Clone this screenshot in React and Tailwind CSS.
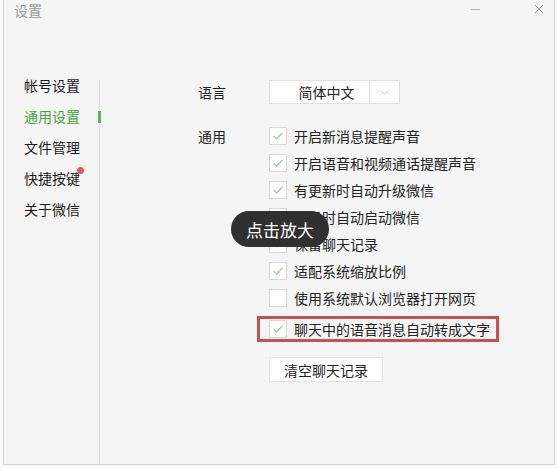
const font = { fontFamily: '"Noto Sans CJK SC", "Noto Sans", sans-serif' }

const menu = ['帐号设置', '通用设置', '文件管理', '快捷按键', '关于微信']

const options = [
  { label: '开启新消息提醒声音', on: true },
  { label: '开启语音和视频通话提醒声音', on: true },
  { label: '有更新时自动升级微信', on: true },
  { label: '开机时自动启动微信', on: true },
  { label: '保留聊天记录', on: true },
  { label: '适配系统缩放比例', on: true },
  { label: '使用系统默认浏览器打开网页', on: false },
]

function Check({ on }) {
  return (
    <span className="flex h-[18px] w-[18px] shrink-0 items-center justify-center border border-[#d9d9d9] bg-white">
      {on && (
        <svg width="12" height="10" viewBox="0 0 12 10" fill="none">
          <path d="M1.5 5.2 L4.6 8 L10.5 1.8" stroke="#8cc996" strokeWidth="1.1" />
        </svg>
      )}
    </span>
  )
}

function OptionRow({ label, on }) {
  return (
    <div className="flex h-[27px] items-center gap-[7px]">
      <Check on={on} />
      <span className="text-[14px] leading-none text-[#222]">{label}</span>
    </div>
  )
}

export default function App() {
  return (
    <div className="h-[468px] w-[557px] overflow-hidden bg-[#fbfbfb] pb-[3px] pl-[3px] pr-[2px]" style={font}>
      <div className="relative flex h-full flex-col border-b border-l border-r border-[#d4d4d4] bg-[#f5f5f5]">
        {/* title bar */}
        <div className="flex h-[22px] items-start justify-between pl-[10px] pr-[10px] pt-[3px]">
          <span className="text-[14px] leading-none text-[#9a9a9a]">设置</span>
          <div className="flex items-start gap-[54px] text-[#a8a8a8]">
            <span className="mt-[6px] block h-px w-[9px] bg-[#b5b5b5]" />
            <svg width="10" height="10" viewBox="0 0 10 10" className="mt-[1px]">
              <path d="M1 1 L9 9 M9 1 L1 9" stroke="#a5a5a5" strokeWidth="1" />
            </svg>
          </div>
        </div>

        <div className="flex flex-1 pt-[58px]">
          {/* sidebar */}
          <div className="relative w-[96px] border-r border-[#dedede] pl-[20px]">
            <div className="-mt-[11px] flex flex-col">
              {menu.map((m, i) => (
                <div
                  key={m}
                  className={`relative flex h-[31px] items-center text-[14px] leading-none ${
                    i === 1 ? 'text-[#3fa83f]' : 'text-[#1c1c1c]'
                  }`}
                >
                  {m}
                  {i === 3 && (
                    <span className="absolute left-[53px] top-[5px] h-[7px] w-[7px] rounded-full bg-[#dd5b5b]" />
                  )}
                </div>
              ))}
            </div>
            <span className="absolute -right-[2px] top-[31px] h-[12px] w-[3px] bg-[#5cb85c]" />
          </div>

          {/* content */}
          <div className="flex-1 pl-[98px]">
            <div className="flex items-center">
              <span className="w-[71px] text-[14px] leading-none text-[#222]">语言</span>
              <div className="flex h-[24px] w-[131px] items-center border border-[#e2e2e2] bg-white">
                <span className="flex-1 pl-[14px] text-center text-[14px] leading-none text-[#222]">简体中文</span>
                <span className="flex h-full w-[30px] items-center justify-center border-l border-[#e2e2e2]">
                  <svg width="9" height="5" viewBox="0 0 9 5">
                    <path d="M0.5 0.5 L4.5 4.2 L8.5 0.5" stroke="#c8c8c8" fill="none" />
                  </svg>
                </span>
              </div>
            </div>

            <div className="mt-[18px] flex">
              <span className="flex h-[27px] w-[71px] items-center text-[14px] leading-none text-[#222]">通用</span>
              <div className="flex flex-col">
                {options.map((o) => (
                  <OptionRow key={o.label} {...o} />
                ))}
                <div className="-ml-[12px] mt-[5px] flex h-[26px] w-[242px] items-center gap-[7px] border-[3px] border-[#c9504f] pl-[9px]">
                  <Check on />
                  <span className="text-[14px] leading-none text-[#222]">聊天中的语音消息自动转成文字</span>
                </div>
                <button className="mt-[15px] flex h-[25px] w-[114px] items-center justify-center border border-[#e4e4e4] bg-white text-[14px] leading-none text-[#222]">
                  清空聊天记录
                </button>
              </div>
            </div>
          </div>
        </div>

        {/* zoom hint */}
        <div className="absolute left-[227px] top-[211px] flex h-[36px] w-[98px] items-center justify-center rounded-full bg-[#303030] text-[17px] leading-none text-white">
          点击放大
        </div>
      </div>
    </div>
  )
}
